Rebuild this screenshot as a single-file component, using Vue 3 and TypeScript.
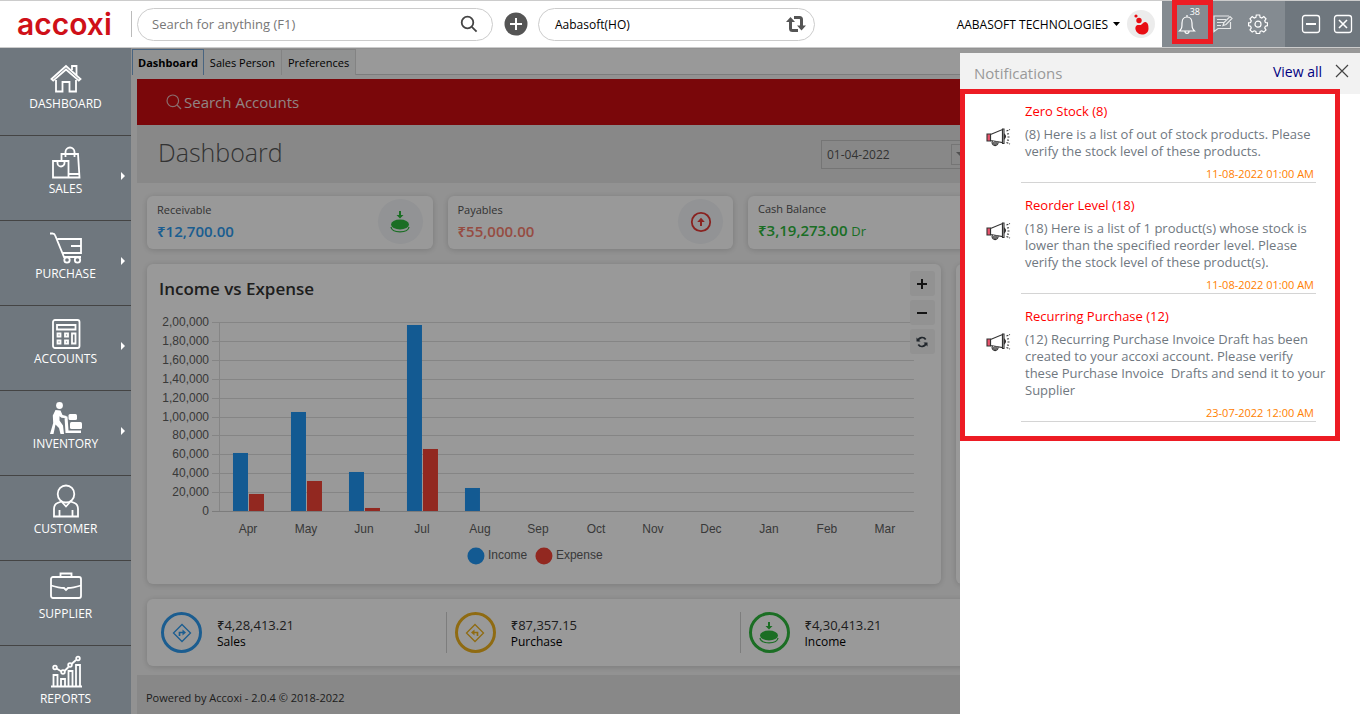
<script setup lang="ts">
import { ref } from 'vue'

interface NavItem {
  label: string
  icon: string
  submenu: boolean
}

interface Notice {
  title: string
  body: string
  time: string
}

const navItems: NavItem[] = [
  { label: 'DASHBOARD', icon: 'home', submenu: false },
  { label: 'SALES', icon: 'bags', submenu: true },
  { label: 'PURCHASE', icon: 'cart', submenu: true },
  { label: 'ACCOUNTS', icon: 'calc', submenu: true },
  { label: 'INVENTORY', icon: 'trolley', submenu: true },
  { label: 'CUSTOMER', icon: 'person', submenu: false },
  { label: 'SUPPLIER', icon: 'case', submenu: false },
  { label: 'REPORTS', icon: 'chart', submenu: false },
]

const tabs: string[] = ['Dashboard', 'Sales Person', 'Preferences']
const activeTab = ref<string>('Dashboard')

const notices: Notice[] = [
  {
    title: 'Zero Stock (8)',
    body: '(8) Here is a list of out of stock products. Please\nverify the stock level of these products.',
    time: '11-08-2022 01:00 AM',
  },
  {
    title: 'Reorder Level (18)',
    body: '(18) Here is a list of 1 product(s) whose stock is\nlower than the specified reorder level. Please\nverify the stock level of these product(s).',
    time: '11-08-2022 01:00 AM',
  },
  {
    title: 'Recurring Purchase (12)',
    body: '(12) Recurring Purchase Invoice Draft has been\ncreated to your accoxi account. Please verify\nthese Purchase Invoice  Drafts and send it to your\nSupplier',
    time: '23-07-2022 12:00 AM',
  },
]

const months: string[] = ['Apr', 'May', 'Jun', 'Jul', 'Aug', 'Sep', 'Oct', 'Nov', 'Dec', 'Jan', 'Feb', 'Mar']
const income: number[] = [61500, 105000, 41500, 197000, 24500, 0, 0, 0, 0, 0, 0, 0]
const expense: number[] = [18500, 32000, 3000, 66000, 0, 0, 0, 0, 0, 0, 0, 0]
const ticks: string[] = ['2,00,000', '1,80,000', '1,60,000', '1,40,000', '1,20,000', '1,00,000', '80,000', '60,000', '40,000', '20,000', '0']

const plot = { left: 72, right: 767, top: 17, bottom: 206 }
const pitch = (plot.right - plot.left) / months.length
const tickY = (i: number): number => Math.round(plot.top + (i * (plot.bottom - plot.top)) / 10)
const barHeight = (v: number): number => Math.round((v / 200000) * (plot.bottom - plot.top))
const groupX = (i: number): number => Math.round(plot.left + i * pitch)
</script>

<template>
  <div class="app">
    <header class="topbar">
      <div class="logo">accoxi</div>
      <div class="search">
        <input type="text" placeholder="Search for anything (F1)" aria-label="Search for anything" />
        <button type="button" aria-label="Search">
          <svg width="18" height="18" viewBox="0 0 18 18" fill="none" stroke="#444" stroke-width="1.8">
            <circle cx="7.5" cy="7.5" r="5.8" />
            <path d="M11.8 11.8L16.6 16.6" />
          </svg>
        </button>
      </div>
      <button type="button" class="add" aria-label="Add">
        <svg width="24" height="24" viewBox="0 0 24 24">
          <circle cx="12" cy="12" r="11.5" fill="#555" />
          <path d="M12 6v12M6 12h12" stroke="#fff" stroke-width="2" />
        </svg>
      </button>
      <div class="branch">
        <span>Aabasoft(HO)</span>
        <button type="button" aria-label="Switch branch">
          <svg width="20" height="18" viewBox="0 0 20 18" fill="none" stroke="#555" stroke-width="3">
            <path d="M4.500 6v7.500q0 2 2 2H12M8 2.500h5.500q2 0 2 2V12" />
            <path d="M0 7L4.500 2L9 7zM11 10.500L15.500 15.500L20 10.500z" fill="#555" stroke="none" />
          </svg>
        </button>
      </div>
      <button type="button" class="company">
        AABASOFT TECHNOLOGIES
        <svg width="7" height="4" viewBox="0 0 7 4"><path d="M0 0h7L3.500 4z" fill="#000" /></svg>
      </button>
      <div class="avatar">
        <svg width="28" height="28" viewBox="0 0 28 28">
          <circle cx="14" cy="14" r="14" fill="#ececec" />
          <circle cx="9" cy="6" r="1.600" fill="#e80d13" />
          <circle cx="12" cy="10.500" r="2.700" fill="#e80d13" />
          <path d="M8.500 17c1-2.500 3-2 4.500-2 2.500 0 3-3.500 5.500-3 3 .8 3 4.500 3 6.500 0 4-3 6-6.500 6s-7.500-3.500-6.500-7.500z" fill="#e80d13" />
        </svg>
      </div>
      <div class="tools">
        <button type="button" class="bell" aria-label="Notifications">
          <svg width="18" height="20" viewBox="0 0 18 20" fill="none" stroke="#fff" stroke-width="1.200">
            <path d="M9 1v2M1.500 17c2.500-2.500 2.500-4 2.500-8 0-3.500 2-6 5-6s5 2.500 5 6c0 4 0 5.500 2.500 8zM7 17.500a2 1.800 0 0 0 4 0" />
          </svg>
          <span class="count">38</span>
        </button>
        <button type="button" class="tool chat" aria-label="Messages">
          <svg width="20" height="18" viewBox="0 0 20 18" fill="none" stroke="#e6e8e9" stroke-width="1.200">
            <path d="M16 1H1v15.500l4-3h12.500V7M4 4.500h9M4 7.500h7M4 10.500h4M10 10.500l1-3 6-6 2 2-6 6z" />
          </svg>
        </button>
        <button type="button" class="tool" aria-label="Settings">
          <svg width="20" height="20" viewBox="0 0 20 20" fill="none" stroke="#fff" stroke-width="1.200">
            <path d="M8.300 1h3.400l.4 2.300 1.700.7 2-1.400 2.200 2.300-1.300 1.900.7 1.700 2.100.3v2.900l-2.100.5-.7 1.700 1.300 2-2.200 2.200-2-1.300-1.700.7-.4 2H8.300l-.4-2-1.700-.7-2 1.300L2 15.900l1.300-2-.7-1.700L.6 11.700V8.800l2-.3.7-1.700L2 4.900l2.200-2.300 2 1.400 1.700-.7z" />
            <circle cx="10" cy="10.200" r="3" />
          </svg>
        </button>
      </div>
      <div class="window">
        <button type="button" aria-label="Minimize">
          <svg width="20" height="20" viewBox="0 0 20 20" fill="none" stroke="#fff" stroke-width="1.300">
            <rect x="1.500" y="1.500" width="17" height="17" rx="2.500" /><path d="M5 10h10" stroke-width="2" />
          </svg>
        </button>
        <button type="button" aria-label="Close window">
          <svg width="20" height="20" viewBox="0 0 20 20" fill="none" stroke="#fff" stroke-width="1.300">
            <rect x="1.500" y="1.500" width="17" height="17" rx="2.500" /><path d="M6 6l8 8M14 6l-8 8" stroke-width="1.600" />
          </svg>
        </button>
      </div>
    </header>

    <div class="body">
      <nav class="sidebar">
        <a v-for="item in navItems" :key="item.label" href="#" class="nav-item">
          <svg v-if="item.icon === 'home'" width="32" height="32" viewBox="0 0 32 32" class="ico">
            <path d="M1.500 17L16 4l14.500 13-1.700 1.600L16 7.500 3.200 18.600z" />
            <path d="M22 8V4h4.500v9M6 18v11.500h6.500V20h7v9.500H26V18" />
          </svg>
          <svg v-else-if="item.icon === 'bags'" width="32" height="32" viewBox="0 0 32 32" class="ico">
            <path d="M3 14h15.500v16.500H3zM11.500 13V7H28l1.500 23.500h-11M18.500 27h10.500" />
            <path d="M7.500 14v2a3.500 3.500 0 0 0 7 0v-2M15.500 10V5a4.500 4.500 0 0 1 9 0v5" />
          </svg>
          <svg v-else-if="item.icon === 'cart'" width="32" height="32" viewBox="0 0 32 32" class="ico">
            <path d="M0 1.500h2.500q2 0 2.700 2L14 25h17M7.500 7H31v14H12.500M21 14h10" />
            <circle cx="17" cy="28" r="2.700" /><circle cx="27.500" cy="28" r="2.700" />
          </svg>
          <svg v-else-if="item.icon === 'calc'" width="32" height="32" viewBox="0 0 32 32" class="ico">
            <rect x="3" y="3" width="26.500" height="28" rx="2" />
            <path d="M7 8h18.500v4.500H7zM7.500 16.500h3v3h-3zM15 16.500h3v3h-3zM7.500 23.500h3v3h-3zM15 23.500h3v3h-3zM22 16.500h3.500v10H22z" />
          </svg>
          <svg v-else-if="item.icon === 'trolley'" width="32" height="32" viewBox="0 0 32 32" class="solid">
            <circle cx="9.500" cy="3.500" r="3.400" />
            <path d="M5.500 8l5 .5 2 4.500 4 1v2.200l-5-.4-2-1.600v4.300l3.500 5L14 32h-3.500L9 26l-3.500-3.500L3.500 32H0l3.200-11-.4-7.500zM14.500 15l3-.5 1 14H31v2.500H15.500z" />
            <rect x="18.500" y="12" width="8.500" height="6" rx="1.500" /><rect x="20" y="20" width="12" height="7" rx="1.500" />
          </svg>
          <svg v-else-if="item.icon === 'person'" width="32" height="32" viewBox="0 2 32 32" class="ico">
            <ellipse cx="16" cy="9" rx="8.300" ry="8.500" />
            <path d="M11.500 16.500L7.500 18Q4 19.500 4 24v7.500h24V24q0-4.500-3.500-6l-4-1.500L16 21.500zM9.500 25v6.500M22.500 25v6.500" />
          </svg>
          <svg v-else-if="item.icon === 'case'" width="32" height="32" viewBox="0 2 32 32" class="ico">
            <rect x="1" y="7" width="30" height="21" rx="2" />
            <path d="M10.500 7V3.500h11V7M1 15.500q8 2.500 13 2.500l2 2 2-2q5 0 13-2.500" />
          </svg>
          <svg v-else width="32" height="32" viewBox="0 2 32 32" class="ico">
            <path d="M1 31.500h31M3.500 31V20h4v11M11 31v-7h4v7M18.500 31V16h4v15M26 31V10h4v21M6.500 13.500l5 3M14.500 16l4-4M21.500 9l4.500-4" />
            <circle cx="5" cy="12.500" r="1.800" /><circle cx="13" cy="17" r="1.800" /><circle cx="20" cy="10" r="1.800" /><circle cx="28" cy="3.500" r="1.800" />
          </svg>
          <span>{{ item.label }}</span>
          <svg v-if="item.submenu" class="caret" width="4" height="8" viewBox="0 0 4 8"><path d="M0 0l4 4-4 4z" fill="#fff" /></svg>
        </a>
      </nav>

      <main class="main">
        <div class="tabs" role="tablist">
          <button
            v-for="tab in tabs"
            :key="tab"
            type="button"
            role="tab"
            :aria-selected="tab === activeTab"
            :class="['tab', { active: tab === activeTab }]"
            @click="activeTab = tab"
          >{{ tab }}</button>
          <div class="tab-rest"></div>
        </div>

        <div class="page">
          <button type="button" class="account-search">
            <svg width="16" height="16" viewBox="0 0 16 16" fill="none" stroke="#e6b7b8" stroke-width="1.200">
              <circle cx="6.800" cy="6.800" r="5.800" /><path d="M11 11l4 4" />
            </svg>
            Search Accounts
          </button>

          <div class="title-band">
            <h1>Dashboard</h1>
            <div class="date">
              <input type="text" value="01-04-2022" aria-label="From date" />
              <button type="button" aria-label="Open calendar">
                <svg width="8" height="4" viewBox="0 0 8 4"><path d="M0 0h8L4 4z" fill="#888" /></svg>
              </button>
            </div>
          </div>

          <div class="content">
            <section class="stats">
              <article class="card stat">
                <div>
                  <p>Receivable</p>
                  <strong class="blue">₹12,700.00</strong>
                </div>
                <span class="bubble">
                  <svg width="20" height="24" viewBox="0 0 20 24" fill="#2db83d">
                    <path d="M9 1h2v4h2.500L10 8.500 6.500 5H9z" /><ellipse cx="10" cy="14.500" rx="9" ry="5" />
                    <path d="M1 17c1 6.500 17 6.500 18 0" fill="none" stroke="#2db83d" stroke-width="1.300" />
                  </svg>
                </span>
              </article>
              <article class="card stat">
                <div>
                  <p>Payables</p>
                  <strong class="coral">₹55,000.00</strong>
                </div>
                <span class="bubble">
                  <svg width="22" height="22" viewBox="0 0 22 22">
                    <circle cx="11" cy="11" r="9.200" fill="none" stroke="#e53935" stroke-width="1.800" />
                    <path d="M10 15v-4H7.200L11 6.800l3.800 4.200H12v4z" fill="#e53935" />
                  </svg>
                </span>
              </article>
              <article class="card stat">
                <div>
                  <p>Cash Balance</p>
                  <strong class="green">₹3,19,273.00 <small>Dr</small></strong>
                </div>
              </article>
              <article class="card stat"></article>
            </section>

            <section class="charts">
              <article class="card chart">
                <h2>Income vs Expense</h2>
                <svg class="plot" height="279" viewBox="0 0 794 279" preserveAspectRatio="xMinYMin meet">
                  <g v-for="(t, i) in ticks" :key="t">
                    <rect x="65" :y="tickY(i)" width="702" height="1" :fill="i === 10 ? '#cfcfcf' : '#dedede'" />
                    <text x="62" :y="tickY(i) + 4" text-anchor="end">{{ t }}</text>
                  </g>
                  <rect :x="plot.left" :y="plot.top" width="1" :height="plot.bottom - plot.top" fill="#dedede" />
                  <g v-for="(m, i) in months" :key="m">
                    <rect :x="groupX(i) + 14" :y="plot.bottom - barHeight(income[i])" width="15" :height="barHeight(income[i])" fill="#2196f3" />
                    <rect :x="groupX(i) + 30" :y="plot.bottom - barHeight(expense[i])" width="15" :height="barHeight(expense[i])" fill="#f44336" />
                    <text :x="groupX(i) + 29" y="228" text-anchor="middle">{{ m }}</text>
                  </g>
                  <circle cx="329" cy="251" r="8.500" fill="#2196f3" />
                  <text x="341" y="254">Income</text>
                  <circle cx="397" cy="251" r="8.500" fill="#f44336" />
                  <text x="409" y="254">Expense</text>
                </svg>
                <div class="zoom">
                  <button type="button" aria-label="Zoom in">
                    <svg width="12" height="12" viewBox="0 0 12 12"><path d="M6 1v10M1 6h10" stroke="#222" stroke-width="2" /></svg>
                  </button>
                  <button type="button" aria-label="Zoom out">
                    <svg width="12" height="12" viewBox="0 0 12 12"><path d="M1 6h10" stroke="#222" stroke-width="2" /></svg>
                  </button>
                  <button type="button" aria-label="Reset zoom">
                    <svg width="12" height="12" viewBox="0 0 12 12" fill="none" stroke="#37404a" stroke-width="1.700">
                      <path d="M2 5a4.200 4.200 0 0 1 7.700-1.500M10 7a4.200 4.200 0 0 1-7.700 1.500" />
                      <path d="M.5 1.500V5.500H4.500zM11.500 10.500V6.500H7.500z" fill="#37404a" stroke="none" />
                    </svg>
                  </button>
                </div>
              </article>
              <article class="card"></article>
            </section>

            <section class="card totals">
              <div class="total">
                <span class="ring blue">
                  <svg width="20" height="20" viewBox="0 0 20 20" fill="none" stroke="currentColor" stroke-width="1.300">
                    <path d="M10 1.500l8.500 8.500-8.500 8.500L1.500 10z" /><path d="M7.500 13V9.500H11" stroke-width="1.700" /><path d="M10.500 6.500l3.500 3-3.500 3z" fill="currentColor" stroke="none" />
                  </svg>
                </span>
                <div><strong>₹4,28,413.21</strong><p>Sales</p></div>
              </div>
              <div class="total">
                <span class="ring amber">
                  <svg width="20" height="20" viewBox="0 0 20 20" fill="none" stroke="currentColor" stroke-width="1.300">
                    <path d="M10 1.500l8.500 8.500-8.500 8.500L1.500 10z" /><path d="M12.500 13V9.500H9" stroke-width="1.700" /><path d="M9.500 6.500l-3.500 3 3.500 3z" fill="currentColor" stroke="none" />
                  </svg>
                </span>
                <div><strong>₹87,357.15</strong><p>Purchase</p></div>
              </div>
              <div class="total">
                <span class="ring lime">
                  <svg width="20" height="24" viewBox="0 0 20 24" fill="currentColor">
                    <path d="M9 1h2v4h2.500L10 8.500 6.500 5H9z" /><ellipse cx="10" cy="14.500" rx="9" ry="5" />
                    <path d="M1 17c1 6.500 17 6.500 18 0" fill="none" stroke="currentColor" stroke-width="1.300" />
                  </svg>
                </span>
                <div><strong>₹4,30,413.21</strong><p>Income</p></div>
              </div>
              <div class="total"></div>
            </section>
          </div>

          <footer class="footer">Powered by Accoxi - 2.0.4 © 2018-2022</footer>
        </div>
        <div class="shade"></div>
      </main>

      <aside class="panel">
        <div class="panel-head">
          <h2>Notifications</h2>
          <a href="#">View all</a>
          <button type="button" aria-label="Close notifications">
            <svg width="14" height="14" viewBox="0 0 14 14" stroke="#444" stroke-width="1.200"><path d="M1 1l12 12M13 1L1 13" /></svg>
          </button>
        </div>
        <ul class="notices">
          <li v-for="n in notices" :key="n.title">
            <svg class="horn" width="25" height="20" viewBox="0 0 25 20" fill="none" stroke="#333" stroke-width="1.100">
              <path d="M4.500 6.500L16.500 1.500v13L4.500 12.500z" fill="#fff" />
              <path d="M1 6h3.500v7H1z" fill="#e8536c" />
              <path d="M16.500 1h1.500v14.500h-1.500z" />
              <path d="M18.500 6.500q2 2 0 4z" fill="#e8263f" />
              <path d="M6.500 13a3 3 0 1 0 5.500 1" fill="#ddd" />
              <circle cx="9" cy="15" r="1.300" />
              <path d="M20.500 3l3.500-1.500M21 6l3-.5M21.500 9H24M21 12l3 .5M20.500 14.500L24 16" stroke-dasharray="2 1" />
            </svg>
            <div class="notice">
              <h3>{{ n.title }}</h3>
              <p>{{ n.body }}</p>
              <time>{{ n.time }}</time>
            </div>
          </li>
        </ul>
      </aside>
    </div>
  </div>
</template>

<style>
body {
  margin: 0;
}
</style>

<style scoped>
* {
  box-sizing: border-box;
}
.app {
  height: 100vh;
  display: flex;
  flex-direction: column;
  overflow: hidden;
  font-family: "Open Sans", "Noto Sans", sans-serif;
  font-size: 12px;
  color: #222;
}
button {
  font: inherit;
  color: inherit;
  background: none;
  border: 0;
  padding: 0;
  display: flex;
  align-items: center;
  justify-content: center;
}
h1, h2, h3, p, ul {
  margin: 0;
  padding: 0;
  font-weight: 400;
}
svg {
  display: block;
  flex: none;
}

.topbar {
  flex: none;
  height: 48px;
  display: flex;
  align-items: center;
  background: #fff;
  border-top: 1px solid #ccc;
  border-bottom: 1px solid #ccc;
}
.logo {
  width: 132px;
  height: 26px;
  padding-left: 17px;
  line-height: 27px;
  border-right: 1px solid #bbb;
  font-family: Inter, "Open Sans", sans-serif;
  font-weight: 600;
  font-size: 30px;
  color: #cf1018;
}
.search, .branch {
  height: 33px;
  border: 1px solid #ccc;
  border-radius: 17px;
  display: flex;
  align-items: center;
  justify-content: space-between;
}
.search {
  flex: 0 1 356px;
  margin-left: 5px;
  padding: 0 14px;
}
.search input {
  flex: 1;
  min-width: 0;
  border: 0;
  outline: 0;
  padding: 0;
  background: none;
  font: inherit;
  font-size: 13px;
}
.search input::placeholder {
  color: #777;
}
.add {
  margin: 0 10px 0 11px;
}
.branch {
  flex: 0 1 277px;
  padding: 0 8px 0 16px;
  color: #000;
}
.company {
  margin-left: auto;
  gap: 5px;
  color: #000;
}
.avatar {
  margin: 0 7px;
}
.tools, .window {
  align-self: stretch;
  display: flex;
  align-items: center;
}
.tools {
  width: 123px;
  padding-left: 10px;
  background: #848b91;
}
.bell {
  position: relative;
  z-index: 3;
  align-self: flex-start;
  width: 41px;
  height: 44px;
  margin-top: -1px;
  padding: 4px 12px 0 0;
  border: 5px solid #ed1c24;
  color: #fff;
}
.count {
  position: absolute;
  top: 0;
  right: 8px;
  font-size: 9px;
  line-height: 14px;
}
.tool {
  width: 20px;
  margin-right: 15px;
}
.window {
  width: 75px;
  justify-content: center;
  gap: 12px;
  padding-left: 8px;
  background: #6f777e;
}

.body {
  position: relative;
  flex: 1;
  min-height: 0;
  display: flex;
}
.sidebar {
  flex: none;
  width: 131px;
  padding-top: 3px;
  overflow: hidden;
  background: #6f777e;
}
.nav-item {
  position: relative;
  display: flex;
  flex-direction: column;
  align-items: center;
  height: 85px;
  padding-top: 11px;
  border-bottom: 1px solid #444;
  color: #fff;
  text-decoration: none;
  line-height: 20px;
}
.ico {
  fill: none;
  stroke: #fff;
  stroke-width: 1.8;
  overflow: visible;
}
.solid {
  fill: #fff;
}
.caret {
  position: absolute;
  right: 6px;
  top: 36px;
}

.main {
  position: relative;
  flex: 1;
  min-width: 0;
  display: flex;
  flex-direction: column;
  padding: 1px 0 0 1px;
  background: #f4f4f4;
}
.shade {
  position: absolute;
  inset: 0;
  background: rgba(0, 0, 0, 0.4);
}
.tabs {
  flex: none;
  display: flex;
  height: 26px;
  background: #fff;
}
.tab {
  padding: 0 6px;
  border: 1px solid #dadada;
  border-width: 1px 1px 0 0;
  background: #f2f4f4;
  color: #000;
  font-size: 11px;
}
.tab.active {
  padding: 0 5px;
  border: 1px solid #7ba7d6;
  border-bottom: 0;
  font-weight: 700;
}
.tab-rest {
  flex: 1;
  border-bottom: 1px solid #d0d0d0;
}
.page {
  flex: 1;
  display: flex;
  flex-direction: column;
  margin: 4px 0 0 5px;
}
.account-search {
  flex: none;
  height: 46px;
  justify-content: flex-start;
  gap: 2px;
  padding-left: 29px;
  background: #cb0d12;
  color: #f0dcdc;
  font-size: 15px;
}
.title-band {
  flex: none;
  display: flex;
  justify-content: space-between;
  align-items: center;
  height: 58px;
  padding: 0 388px 4px 21px;
  background: #e3e3e3;
}
h1 {
  font-size: 25px;
  font-weight: 300;
  line-height: 34px;
  color: #555;
}
.date {
  display: flex;
  align-items: center;
  width: 151px;
  height: 29px;
  margin-top: 4px;
  padding: 3px;
  border: 1px solid #c4c4c4;
}
.date input {
  flex: 1;
  min-width: 0;
  border: 0;
  padding: 0 2px;
  background: none;
  font: inherit;
  color: #555;
}
.date button {
  width: 17px;
  height: 21px;
  border: 1px solid #c4c4c4;
}
.content {
  display: flex;
  flex-direction: column;
  gap: 15px;
  padding: 13px 26px 7px 10px;
}
.card {
  background: #fff;
  border-radius: 6px;
  box-shadow: 0 1px 6px rgba(0, 0, 0, 0.16);
}
.stats {
  display: grid;
  grid-template-columns: repeat(4, 1fr);
  gap: 15px;
}
.stat {
  height: 53px;
  display: flex;
  align-items: center;
  justify-content: space-between;
  padding: 0 10px 2px;
}
.stat p {
  font-size: 11px;
  line-height: 18px;
  color: #555;
}
.stat strong {
  display: block;
  font-size: 15px;
  line-height: 24px;
  font-weight: 600;
}
.stat small {
  font-size: 13px;
  font-weight: 400;
}
.blue { color: #2e9bf0; }
.coral { color: #fa7f6f; }
.green { color: #2db83d; }
.bubble {
  display: grid;
  place-items: center;
  width: 45px;
  height: 45px;
  border-radius: 50%;
  background: #f3f5f8;
}
.charts {
  display: grid;
  grid-template-columns: 21fr 10fr;
  gap: 15px;
}
.chart {
  position: relative;
  height: 320px;
  padding-top: 13px;
}
.chart h2 {
  padding-left: 12px;
  margin-bottom: 4px;
  font-size: 17px;
  line-height: 24px;
  font-weight: 600;
  color: #333;
}
.plot {
  width: 100%;
  font-family: "Liberation Sans", Arial, sans-serif;
  font-size: 12px;
  fill: #606060;
}
.zoom {
  position: absolute;
  top: 7px;
  right: 6px;
  display: grid;
  gap: 4px;
}
.zoom button {
  width: 25px;
  height: 25px;
  border-radius: 3px;
  background: #f3f3f3;
}
.totals {
  display: grid;
  grid-template-columns: repeat(4, 1fr);
  align-items: center;
  height: 67px;
  padding: 0 6px;
}
.total {
  display: flex;
  align-items: center;
  gap: 15px;
  height: 41px;
  padding-left: 8px;
  border-right: 1px solid #d0d0d0;
  color: #000;
}
.total strong {
  display: block;
  font-size: 13px;
  line-height: 18px;
  font-weight: 500;
  color: #333;
}
.total p {
  font-size: 12px;
  line-height: 16px;
}
.ring {
  display: grid;
  place-items: center;
  width: 41px;
  height: 41px;
  border: 3px solid currentColor;
  border-radius: 50%;
}
.amber { color: #efb21f; }
.lime { color: #2db83d; }
.footer {
  flex: 1;
  padding: 14px 9px 0;
  background: #e3e3e3;
  border-top: 2px solid #f4f4f4;
  font-size: 11px;
  line-height: 18px;
  color: #333;
}

.panel {
  position: absolute;
  top: 5px;
  right: 0;
  bottom: 0;
  width: 400px;
  background: #fff;
}
.panel-head {
  display: flex;
  align-items: center;
  height: 41px;
  padding: 0 11px 5px 14px;
  background: #f2f2f2;
}
.panel-head h2 {
  flex: 1;
  padding-top: 4px;
  font-size: 15px;
  color: #999;
}
.panel-head a {
  margin-right: 13px;
  font-size: 14px;
  color: #000080;
  text-decoration: none;
}
.notices {
  position: relative;
  display: grid;
  grid-template-columns: minmax(0, 1fr);
  gap: 13px;
  width: 380px;
  margin-top: -5px;
  padding: 8px 19px 14px 21px;
  border: 5px solid #ed1c24;
  background: #fff;
  list-style: none;
}
.notices li {
  display: flex;
  gap: 10px;
}
.horn {
  margin-top: 26px;
}
.notice {
  flex: 1;
  min-width: 0;
  padding: 0 2px 0 4px;
  border-bottom: 1px solid #d4d4d4;
}
.notice h3 {
  font-size: 13px;
  line-height: 18px;
  color: #f00;
}
.notice p {
  margin: 6px 0;
  font-size: 13px;
  line-height: 17px;
  color: #70787f;
  white-space: pre;
}
.notice time {
  display: block;
  font-size: 11px;
  line-height: 16px;
  text-align: right;
  color: #ff8000;
}
</style>
